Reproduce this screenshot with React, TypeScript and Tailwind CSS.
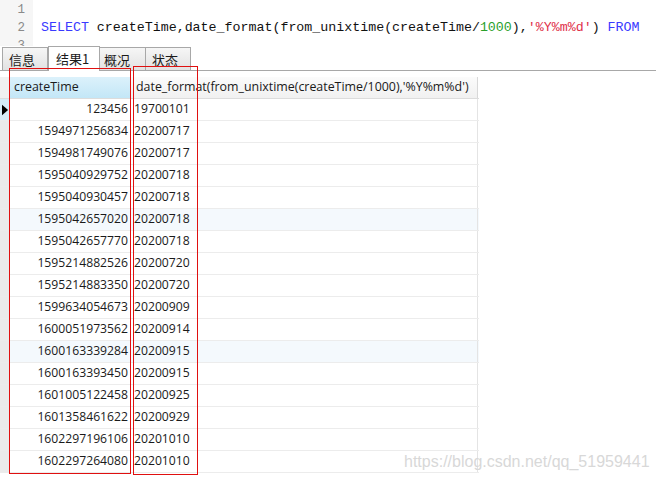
import React from "react";

const rows: [string, string][] = [
  ["123456", "19700101"],
  ["1594971256834", "20200717"],
  ["1594981749076", "20200717"],
  ["1595040929752", "20200718"],
  ["1595040930457", "20200718"],
  ["1595042657020", "20200718"],
  ["1595042657770", "20200718"],
  ["1595214882526", "20200720"],
  ["1595214883350", "20200720"],
  ["1599634054673", "20200909"],
  ["1600051973562", "20200914"],
  ["1600163339284", "20200915"],
  ["1600163393450", "20200915"],
  ["1601005122458", "20200925"],
  ["1601358461622", "20200929"],
  ["1602297196106", "20201010"],
  ["1602297264080", "20201010"],
];

const mono = { fontFamily: '"Liberation Mono", "DejaVu Sans Mono", monospace' };

export default function App() {
  return (
    <div
      className="relative w-[656px] h-[479px] overflow-hidden bg-white text-[#1a1a1a]"
      style={{ fontFamily: '"Open Sans", "Noto Sans CJK SC", sans-serif' }}
    >
      {/* editor */}
      <div className="flex h-[46px] overflow-hidden">
        <div className="w-[33px] bg-[#f6f6f6] flex flex-col items-end pr-[8px] text-[12.5px] text-[#8a8a8a] leading-[18px] pt-[1px]" style={mono}>
          <div>1</div>
          <div>2</div>
          <div>3</div>
        </div>
        <div className="pl-[8px] pt-[1px] leading-[18px] text-[13.3px] whitespace-pre text-[#111]" style={mono}>
          <div>&nbsp;</div>
          <div>
            <span className="text-[#3a3aff]">SELECT</span> createTime,date_format(from_unixtime(createTime/
            <span className="text-[#2aa02a]">1000</span>),
            <span className="text-[#e0304a]">'%Y%m%d'</span>) <span className="text-[#3a3aff]">FROM</span>
          </div>
        </div>
      </div>

      {/* tabs */}
      <div className="flex items-end h-[25px] border-b border-[#a8a8a8] pl-[2px] text-[13px] leading-none" style={{ fontFamily: '"Noto Sans CJK SC", "Open Sans", sans-serif' }}>
        <div className="w-[46px] h-[23px] flex items-center pl-[6px] border border-b-0 border-[#a8a8a8] bg-gradient-to-b from-[#f6f6f6] to-[#e2e2e2]">信息</div>
        <div className="w-[52px] h-[25px] flex items-center pl-[7px] border border-b-0 border-[#a8a8a8] bg-white mb-[-1px] pb-[1px]">结果1</div>
        <div className="w-[46px] h-[23px] flex items-center pl-[4px] border border-b-0 border-l-0 border-[#a8a8a8] bg-gradient-to-b from-[#f6f6f6] to-[#e2e2e2]">概况</div>
        <div className="w-[45px] h-[23px] flex items-center pl-[6px] border border-b-0 border-l-0 border-[#a8a8a8] bg-gradient-to-b from-[#f6f6f6] to-[#e2e2e2]">状态</div>
      </div>

      {/* table */}
      <div className="mt-[6px] w-[479px] text-[12.2px]">
        <div className="flex h-[22px] border-b border-[#dcdcdc] text-[12.4px]">
          <div className="w-[10px] bg-[#f0f0f0] border-r border-[#dcdcdc]" />
          <div className="w-[121px] bg-gradient-to-b from-[#dcf1fb] to-[#c3e7f7] border-r border-[#d0d0d0] flex items-center pl-[4px]">createTime</div>
          <div className="w-[347px] bg-gradient-to-b from-[#fbfbfb] to-[#f1f1f1] border-r border-[#d8d8d8] flex items-center pl-[5px]">
            date_format(from_unixtime(createTime/1000),'%Y%m%d')
          </div>
        </div>
        {rows.map(([a, b], i) => {
          const tint = i === 5 || i === 11;
          return (
            <div key={i} className={`flex h-[22px] border-b border-[#ececec] ${tint ? "bg-[#f4f9fd]" : "bg-white"}`}>
              <div className={`w-[10px] border-r border-[#dcdcdc] flex items-center ${i === 0 ? "bg-[#d4ecf8]" : "bg-[#ebebeb]"}`}>
                {i === 0 && (
                  <svg width="8" height="12" viewBox="0 0 8 12" className="ml-[2px]">
                    <polygon points="0,0 7,6 0,12" fill="#000" />
                  </svg>
                )}
              </div>
              <div className="w-[121px] border-r border-[#e4e4e4] flex items-center justify-end pr-[2px]">{a}</div>
              <div className="w-[347px] border-r border-[#e4e4e4] flex items-center pl-[3px]">{b}</div>
            </div>
          );
        })}
      </div>

      {/* annotation boxes */}
      <div className="absolute left-[9px] top-[68px] w-[122px] h-[406px] border-[1.5px] border-[#e01010]" />
      <div className="absolute left-[133px] top-[66px] w-[65px] h-[409px] border-[1.5px] border-[#e01010]" />

      {/* watermark */}
      <div
        className="absolute left-[404px] top-[450px] text-[16px] text-[#d8d8d8]"
        style={{ fontFamily: '"Liberation Sans", Arial, sans-serif' }}
      >
        https://blog.csdn.net/qq_51959441
      </div>
    </div>
  );
}
